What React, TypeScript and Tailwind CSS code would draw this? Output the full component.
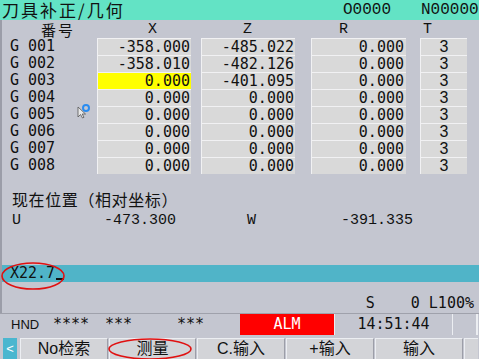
const rows = [
  { no: 'G 001', x: '-358.000', z: '-485.022', r: '0.000', t: '3' },
  { no: 'G 002', x: '-358.010', z: '-482.126', r: '0.000', t: '3' },
  { no: 'G 003', x: '0.000', z: '-401.095', r: '0.000', t: '3', active: true },
  { no: 'G 004', x: '0.000', z: '0.000', r: '0.000', t: '3' },
  { no: 'G 005', x: '0.000', z: '0.000', r: '0.000', t: '3' },
  { no: 'G 006', x: '0.000', z: '0.000', r: '0.000', t: '3' },
  { no: 'G 007', x: '0.000', z: '0.000', r: '0.000', t: '3' },
  { no: 'G 008', x: '0.000', z: '0.000', r: '0.000', t: '3' },
];

const softKeys = [
  { label: 'No检索', w: 'w-[88px]' },
  { label: '测量', w: 'w-[87px]' },
  { label: 'C.输入', w: 'w-[88px]' },
  { label: '+输入', w: 'w-[88px]' },
  { label: '输入', w: 'w-[88px]' },
];

const cell = 'h-[17px] border-t border-l border-[#f1f1f3] leading-[16px]';

export default function App() {
  return (
    <div className="relative w-[479px] h-[359px] overflow-hidden bg-[#c4c6d0] flex flex-col text-[#111] font-['DejaVu_Sans_Mono',monospace]">
      {/* title bar */}
      <div className="h-[20px] shrink-0 bg-[#63e3c5] flex items-center">
        <span className="pl-[2px] text-[17px] leading-[20px] tracking-[2px] font-['Noto_Sans_CJK_SC',sans-serif]">
          刀具补正/几何
        </span>
        <span className="ml-auto w-[78px] text-[16px] leading-[18px] font-['Liberation_Mono',monospace]">O0000</span>
        <span className="w-[58px] text-[16px] leading-[18px] whitespace-nowrap font-['Liberation_Mono',monospace]">N00000</span>
      </div>

      {/* body */}
      <div className="h-[293px] shrink-0 flex flex-col border-l-2 border-[#9b9da8]">
        {/* column headings */}
        <div className="h-[18px] flex items-center text-[15px] leading-[15px] font-['Liberation_Mono',monospace]">
          <span className="w-[146px] pl-[39px] tracking-[2px] font-['Noto_Sans_CJK_SC',sans-serif] text-[15px]">番号</span>
          <span className="w-[95px]">X</span>
          <span className="w-[96px]">Z</span>
          <span className="w-[84px]">R</span>
          <span>T</span>
        </div>

        {/* offset table */}
        <div className="flex flex-col text-[15px]">
          {rows.map((row) => (
            <div key={row.no} className="flex h-[17px]">
              <div className="w-[95px] pl-[8px] leading-[17px]">{row.no}</div>
              <div className={`w-[94px] text-right pr-[1px] ${cell} ${row.active ? 'bg-[#ffff00]' : 'bg-[#d9d9d9]'}`}>
                {row.x}
              </div>
              <div className="w-[10px]" />
              <div className={`w-[94px] text-right pr-[1px] bg-[#d9d9d9] ${cell}`}>{row.z}</div>
              <div className="w-[16px]" />
              <div className={`w-[95px] text-right pr-[2px] bg-[#d9d9d9] ${cell}`}>{row.r}</div>
              <div className="w-[14px]" />
              <div className={`w-[47px] text-center bg-[#d9d9d9] ${cell} font-['Liberation_Sans',sans-serif] text-[16px]`}>
                {row.t}
              </div>
            </div>
          ))}
        </div>

        {/* current position */}
        <div className="mt-[15px] h-[20px] pl-[10px] text-[16px] leading-[20px] tracking-[0.6px] font-['Noto_Sans_CJK_SC',sans-serif]">
          现在位置（相对坐标）
        </div>
        <div className="mt-[3px] h-[18px] flex text-[15px] leading-[18px] font-['Liberation_Mono',monospace]">
          <div className="w-[174px] pl-[10px] flex justify-between">
            <span>U</span>
            <span>-473.300</span>
          </div>
          <div className="w-[237px] pl-[71px] flex justify-between">
            <span>W</span>
            <span>-391.335</span>
          </div>
        </div>

        {/* input buffer */}
        <div className="mt-[35px] h-[17px] bg-[#50b4c8] pl-[8px] flex text-[15px] leading-[17px]">
          <span>X22.7</span>
          <span className="self-end mb-[2px] ml-[1px] w-[8px] h-[2px] bg-[#111]" />
        </div>

        {/* spindle / override */}
        <div className="flex-1 flex items-end justify-end pr-[5px] pb-[1px]">
          <span className="text-[15px] leading-[18px] whitespace-pre">S    0 L100%</span>
        </div>
      </div>

      {/* status line */}
      <div className="h-[22px] shrink-0 flex border-t border-[#9fa1ab] text-[15px] leading-[21px]">
        <div className="w-[240px] flex items-center">
          <span className="pl-[11px] w-[53px] text-[13px] font-['Liberation_Sans',sans-serif]">HND</span>
          <span className="w-[52px]">****</span>
          <span className="w-[72px]">***</span>
          <span>***</span>
        </div>
        <div className="w-[94px] bg-[#ff0000] text-white text-center">ALM</div>
        <div className="w-[119px] text-center border-l border-r border-[#eceef2]">14:51:44</div>
        <div className="flex-1 border-r-2 border-[#eceef2] mr-[1px]" />
      </div>

      {/* soft keys */}
      <div className="flex-1 flex pt-[3px] gap-[1px] text-[16px] leading-[20px] font-['Liberation_Sans','Noto_Sans_CJK_SC',sans-serif]">
        <div className="ml-[3px] w-[14px] bg-[#4ab6cf] text-white text-[13px] flex items-center justify-center">&lt;</div>
        <div className="w-[1px]" />
        {softKeys.map((k) => (
          <div
            key={k.label}
            className={`${k.w} bg-[#d3d4d8] border-t border-l border-[#eceef2] border-r border-r-[#9c9ea8] text-center`}
          >
            {k.label}
          </div>
        ))}
        <div className="flex-1 mr-[1px] bg-[#d3d4d8] border-t border-l border-[#eceef2]" />
      </div>

      {/* mouse cursor */}
      <svg className="absolute left-[76px] top-[103px]" width="16" height="16" viewBox="0 0 16 16">
        <path d="M2 4 L2 14 L4.5 11.5 L6.5 15 L8 14.3 L6.2 11 L9.5 11 Z" fill="#e8e8e8" stroke="#555" strokeWidth="0.8" />
        <circle cx="10" cy="5" r="3" fill="none" stroke="#2a8cf0" strokeWidth="2" />
      </svg>

      {/* hand-drawn markups */}
      <svg className="absolute left-0 top-0 pointer-events-none" width="479" height="359">
        <ellipse cx="33" cy="276" rx="31" ry="13" fill="none" stroke="#e01010" strokeWidth="1.6" />
        <ellipse cx="150" cy="349" rx="41" ry="10" fill="none" stroke="#e01010" strokeWidth="1.6" />
      </svg>
    </div>
  );
}
